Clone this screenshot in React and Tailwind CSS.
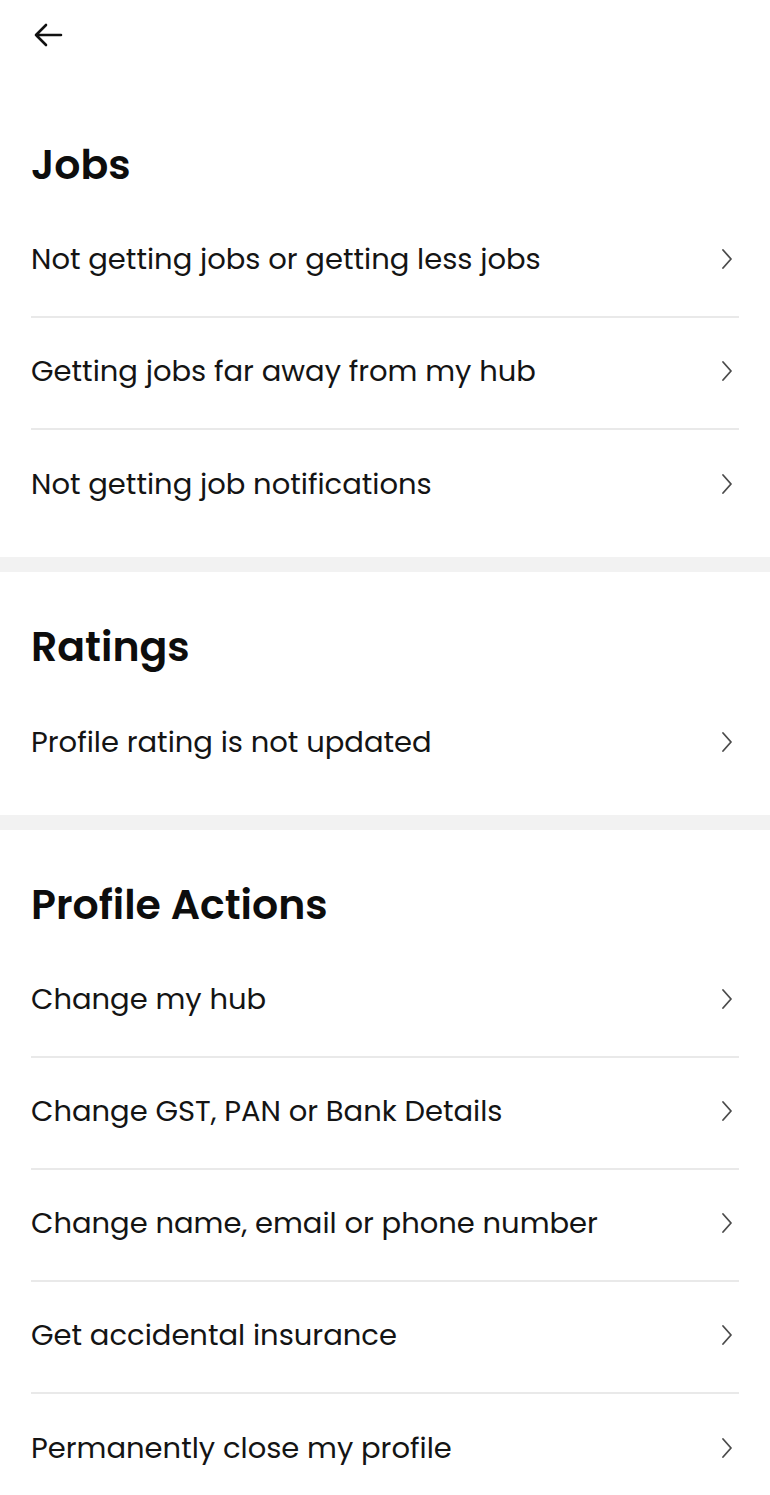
import React from 'react';

const sections = [
  {
    title: 'Jobs',
    items: [
      'Not getting jobs or getting less jobs',
      'Getting jobs far away from my hub',
      'Not getting job notifications',
    ],
  },
  {
    title: 'Ratings',
    items: ['Profile rating is not updated'],
  },
  {
    title: 'Profile Actions',
    items: [
      'Change my hub',
      'Change GST, PAN or Bank Details',
      'Change name, email or phone number',
      'Get accidental insurance',
      'Permanently close my profile',
    ],
  },
];

function Chevron() {
  return (
    <svg width="14" height="24" viewBox="0 0 14 24" fill="none" className="shrink-0">
      <path d="M3 3l8 9-8 9" stroke="#4b4b4b" strokeWidth="1.8" strokeLinecap="round" strokeLinejoin="round" />
    </svg>
  );
}

function Row({ label, last }) {
  return (
    <div className={'flex h-[112px] items-center justify-between pb-[4px] pr-[5px] ' + (last ? '' : 'border-b-2 border-[#e9e9e9]')}>
      <span className="text-[29px] leading-none text-[#141414]">{label}</span>
      <Chevron />
    </div>
  );
}

export default function App() {
  return (
    <div className="min-h-[1495px] w-[770px] overflow-hidden bg-white font-['Poppins','Inter',sans-serif]">
      <header className="flex h-[90px] items-start pl-[33px] pt-[22px]">
        <svg width="30" height="26" viewBox="0 0 30 26" fill="none">
          <path d="M28 13H3M13 3L3 13l10 10" stroke="#111" strokeWidth="2.6" strokeLinecap="round" strokeLinejoin="round" />
        </svg>
      </header>

      {sections.map((s, i) => (
        <section key={s.title}>
          {i > 0 && <div className="h-[15px] bg-[#f2f2f2]" />}
          <div className="px-[31px] pb-[15px] pt-[50px]">
            <h2 className="mb-[16px] h-[50px] text-[41px] font-semibold leading-[50px] text-[#0d0d0d]">
              {s.title}
            </h2>
            {s.items.map((it, j) => (
              <Row key={it} label={it} last={j === s.items.length - 1} />
            ))}
          </div>
        </section>
      ))}
    </div>
  );
}
